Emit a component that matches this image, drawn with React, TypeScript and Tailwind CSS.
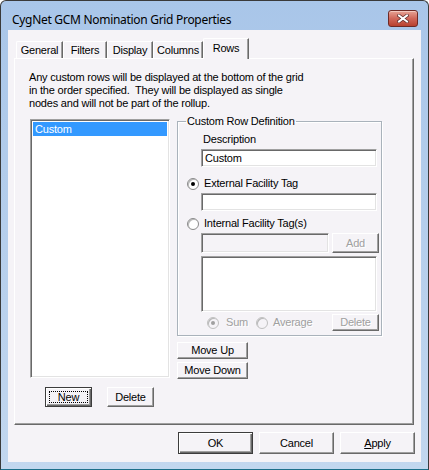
import type { ReactNode } from "react";
import clsx from "clsx";

const face = "bg-[#f5f3f7]";
const sunken =
  "border border-t-[#a0a0a0] border-l-[#a0a0a0] border-r-white border-b-white shadow-[inset_1px_1px_0_#696969,inset_-1px_-1px_0_#e3e3e3]";
const disabledText = "text-[#a0a0a0] [text-shadow:1px_1px_0_#fff]";

const Btn = ({
  children,
  className,
  disabled,
  isDefault,
}: {
  children: ReactNode;
  className?: string;
  disabled?: boolean;
  isDefault?: boolean;
}) => (
  <button
    type="button"
    className={clsx(
      "flex items-center justify-center text-[11px] leading-[13px] tracking-[-0.2px]",
      face,
      isDefault
        ? "border border-[#3c3c3c] shadow-[inset_1px_1px_0_#fff,inset_-1px_-1px_0_#696969,inset_-2px_-2px_0_#a0a0a0]"
        : "border border-t-white border-l-white border-r-[#696969] border-b-[#696969] shadow-[inset_-1px_-1px_0_#a0a0a0]",
      disabled && disabledText,
      className
    )}
  >
    {children}
  </button>
);

const Radio = ({ checked, disabled }: { checked?: boolean; disabled?: boolean }) => (
  <span
    className={clsx(
      "flex h-[12px] w-[12px] shrink-0 items-center justify-center rounded-full border border-[#8a8a8a] shadow-[inset_1px_1px_0_#b8b8b8]",
      disabled ? "bg-[#f5f3f7] border-[#c0c0c0]" : "bg-white"
    )}
  >
    {checked && (
      <span className={clsx("h-[4px] w-[4px] rounded-full", disabled ? "bg-[#a0a0a0]" : "bg-black")} />
    )}
  </span>
);

const tabs = [
  { name: "General", w: "w-[47px]" },
  { name: "Filters", w: "w-[44px]" },
  { name: "Display", w: "w-[46px]" },
  { name: "Columns", w: "w-[50px]" },
];

export default function App() {
  return (
    <div className="flex h-[470px] w-[429px] flex-col overflow-hidden rounded-t-[6px] border border-[#3a3a3a] border-b-[#1d6f8a] bg-gradient-to-b from-[#a9c6e9] to-[#c2d7ef] font-['Liberation_Sans',Arial,sans-serif] text-[11px] leading-[13px] tracking-[-0.2px] text-black">
      {/* title bar */}
      <div className="flex h-[29px] shrink-0 items-start pt-[9px] pl-[11px] pr-[10px]">
        <span className="mt-[3px] font-['Noto_Sans',sans-serif] text-[12px] leading-[14px] tracking-[-0.3px] text-black">
          CygNet GCM Nomination Grid Properties
        </span>
        <div className="ml-auto flex h-[17px] w-[30px] items-center justify-center rounded-[3px] border border-[#6e2a25] bg-gradient-to-b from-[#e6a396] via-[#d0675a] to-[#b8412f] shadow-[inset_0_1px_0_#f3c7be]">
          <svg width="12" height="9" viewBox="0 0 12 9">
            <path d="M2 1.5 L10 7.5 M10 1.5 L2 7.5" stroke="#5a2a2a" strokeWidth="3.4" strokeLinecap="square" />
            <path d="M2 1.5 L10 7.5 M10 1.5 L2 7.5" stroke="#fff" strokeWidth="2" strokeLinecap="square" />
          </svg>
        </div>
      </div>

      {/* client */}
      <div className={clsx("mx-[7px] flex h-[432px] flex-col pt-[8px] pl-[6px]", face)}>
        {/* tab strip */}
        <div className="flex h-[20px] items-end pl-[2px]">
          {tabs.map((t) => (
            <div
              key={t.name}
              className={clsx(
                "flex h-[17px] items-center justify-center rounded-tl-[2px] border-t border-l border-r border-t-white border-l-white border-r-[#696969] shadow-[inset_-1px_0_0_#a0a0a0]",
                t.w
              )}
            >
              {t.name}
            </div>
          ))}
          <div
            className={clsx(
              "relative z-10 -mb-px flex h-[21px] w-[46px] items-center justify-center rounded-tl-[2px] border-t border-l border-r border-t-white border-l-white border-r-[#696969] pb-[2px] shadow-[inset_-1px_0_0_#a0a0a0]",
              face
            )}
          >
            Rows
          </div>
        </div>

        {/* tab page */}
        <div className="flex h-[367px] w-[400px] flex-col border border-t-white border-l-white border-r-[#696969] border-b-[#696969] pt-[12px] pl-[14px] shadow-[inset_-1px_-1px_0_#a0a0a0]">
          <p className="leading-[13px]">
            Any custom rows will be displayed at the bottom of the grid
            <br />
            in the order specified.&nbsp; They will be displayed as single
            <br />
            nodes and will not be part of the rollup.
          </p>

          <div className="mt-[5px] flex items-start">
            {/* left column */}
            <div className="ml-[1px] mt-[4px] flex flex-col">
              <div className={clsx("h-[259px] w-[140px] bg-white p-[2px]", sunken)}>
                <div className="h-[14px] bg-[#3399ff] pl-[2px] leading-[14px] text-white">Custom</div>
              </div>
              <div className="mt-[9px] flex gap-[15px] pl-[15px]">
                <Btn isDefault className="h-[20px] w-[47px] p-[3px]">
                  <span className="flex h-full w-full items-center justify-center border border-dotted border-black">
                    New
                  </span>
                </Btn>
                <Btn className="h-[20px] w-[47px]">Delete</Btn>
              </div>
            </div>

            {/* right column */}
            <div className="ml-[7px] flex flex-col">
              <fieldset className="flex h-[221px] w-[205px] flex-col border border-[#a9b2bb] p-0 pt-[5px] shadow-[inset_1px_1px_0_#fff,1px_1px_0_#fff]">
                <legend className="ml-[8px] px-[1px] leading-[13px]">Custom Row Definition</legend>
                <div className="ml-[25px] leading-[13px]">Description</div>
                <div className={clsx("ml-[23px] mt-[3px] flex h-[18px] w-[176px] items-center bg-white pl-[3px]", sunken)}>
                  Custom
                </div>

                <div className="ml-[9px] mt-[10px] flex h-[13px] items-center gap-[5px]">
                  <Radio checked />
                  <span>External Facility Tag</span>
                </div>
                <div className={clsx("ml-[23px] mt-[3px] h-[18px] w-[176px] bg-white", sunken)} />

                <div className="ml-[9px] mt-[6px] flex h-[13px] items-center gap-[5px]">
                  <Radio />
                  <span>Internal Facility Tag(s)</span>
                </div>
                <div className="ml-[23px] mt-[3px] flex items-start gap-[3px]">
                  <div className={clsx("h-[20px] w-[128px]", face, sunken)} />
                  <Btn disabled className="h-[20px] w-[47px]">
                    Add
                  </Btn>
                </div>
                <div className={clsx("ml-[23px] mt-[3px] h-[56px] w-[176px] bg-white", sunken)} />

                <div className="mt-[2px] flex h-[17px] items-center pl-[29px] pr-[2px]">
                  <Radio checked disabled />
                  <span className={clsx("ml-[7px] w-[30px]", disabledText)}>Sum</span>
                  <Radio disabled />
                  <span className={clsx("ml-[5px]", disabledText)}>Average</span>
                  <Btn disabled className="ml-auto h-[17px] w-[47px]">
                    Delete
                  </Btn>
                </div>
              </fieldset>

              <Btn className="mt-[6px] h-[17px] w-[71px]">Move Up</Btn>
              <Btn className="mt-[3px] h-[17px] w-[71px]">Move Down</Btn>
            </div>
          </div>
        </div>

        {/* dialog buttons */}
        <div className="mt-[7px] flex justify-end gap-[6px] pr-[6px]">
          <Btn isDefault className="h-[22px] w-[75px]">
            OK
          </Btn>
          <Btn className="h-[22px] w-[75px]">Cancel</Btn>
          <Btn className="h-[22px] w-[75px]">
            <span>
              <span className="underline">A</span>pply
            </span>
          </Btn>
        </div>
      </div>
    </div>
  );
}
